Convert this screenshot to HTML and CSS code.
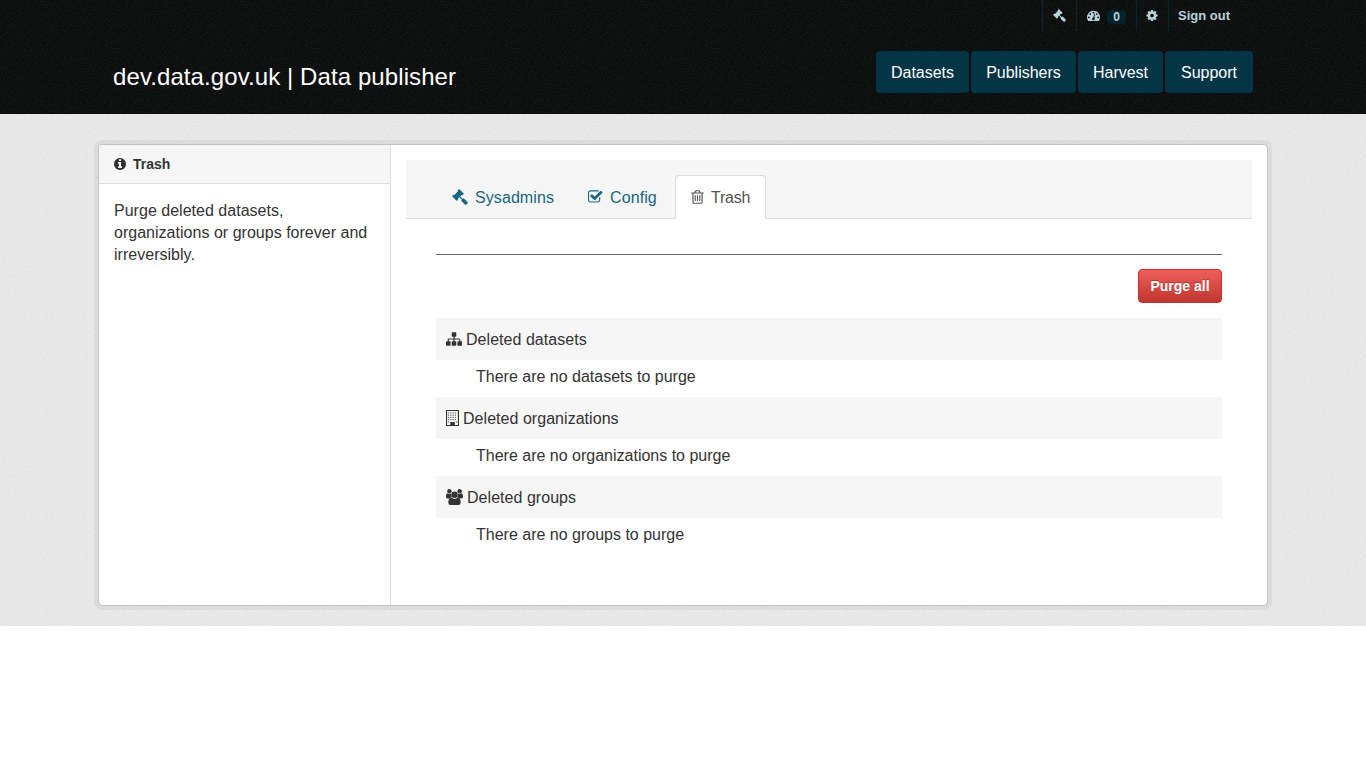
FILE: index.html
```html
<!DOCTYPE html>
<html lang="en">
<head>
<meta charset="utf-8">
<title>Trash - Administration</title>
<link rel="stylesheet" href="styles.css">
</head>
<body>
<svg class="defs" width="0" height="0" aria-hidden="true">
  <symbol id="gavel" viewBox="0 0 1792 1792"><path d="M1771 1536q0 53-37 90l-107 108q-39 37-91 37-53 0-90-37l-363-364q-38-36-38-90 0-53 43-96l-256-256-126 126q-14 14-34 14t-34-14q2 2 12.500 12t12.500 13 10 11.500 10 13.500 6 13.500 5.500 16.500 1.500 18q0 38-28 68-3 3-16.500 18t-19 20.500-18.500 16.500-22 15.500-22 9-26 4.500q-40 0-68-28l-408-408q-28-28-28-68 0-13 4.500-26t9-22 15.500-22 16.500-18.500 20.500-19 18-16.500q30-28 68-28 10 0 18 1.500t16.500 5.500 13.500 6 13.500 10 11.500 10 13 12.500 12 12.500q-14-14-14-34t14-34l348-348q14-14 34-14t34 14q-2-2-12.500-12t-12.500-13-10-11.500-10-13.500-6-13.500-5.500-16.500-1.500-18q0-38 28-68 3-3 16.500-18t19-20.500 18.500-16.500 22-15.500 22-9 26-4.500q40 0 68 28l408 408q28 28 28 68 0 13-4.500 26t-9 22-15.500 22-16.500 18.500-20.500 19-18 16.500q-30 28-68 28-10 0-18-1.500t-16.500-5.500-13.500-6-13.500-10-11.500-10-13-12.500-12-12.500q14 14 14 34t-14 34l-126 126 256 256q43-43 96-43 52 0 91 37l363 363q37 39 37 91z"/></symbol>
  <symbol id="cog" viewBox="128 0 1536 1792"><path d="M1152 896q0-106-75-181t-181-75-181 75-75 181 75 181 181 75 181-75 75-181zm512-109v222q0 12-8 23t-20 13l-185 28q-19 54-39 91 35 50 107 138 10 12 10 25t-9 23q-27 37-99 108t-94 71q-12 0-26-9l-138-108q-44 23-91 38-16 136-29 186-7 28-36 28h-222q-14 0-24.500-8.500t-11.500-21.500l-28-184q-49-16-90-37l-141 107q-10 9-25 9-14 0-25-11-126-114-165-168-7-10-7-23 0-12 8-23 15-21 51-66.500t54-70.500q-27-50-41-99l-183-27q-13-2-21-12.500t-8-23.500v-222q0-12 8-23t19-13l186-28q14-46 39-92-40-57-107-138-10-12-10-24 0-10 9-23 26-36 98.500-107.500t94.500-71.500q13 0 26 10l138 107q44-23 91-38 16-136 29-186 7-28 36-28h222q14 0 24.500 8.500t11.500 21.500l28 184q49 16 90 37l142-107q9-9 24-9 13 0 25 10 129 119 165 170 7 8 7 22 0 12-8 23-15 21-51 66.500t-54 70.500q26 50 41 98l183 28q13 2 21 12.500t8 23.500z"/></symbol>
  <symbol id="gauge" viewBox="0 0 1792 1792"><path d="M384 1152q0-53-37.500-90.500t-90.500-37.500-90.500 37.500-37.500 90.500 37.500 90.500 90.500 37.500 90.500-37.500 37.500-90.500zm192-448q0-53-37.500-90.500t-90.500-37.500-90.500 37.500-37.500 90.500 37.500 90.500 90.500 37.500 90.500-37.500 37.500-90.500zm428 481l101-382q6-26-7.500-48.500t-38.500-29.500-48 6.500-30 39.500l-101 382q-60 5-107 43.500t-63 98.500q-20 77 20 146t117 89 146-20 89-117q16-60-6-117t-72-91zm660-33q0-53-37.500-90.500t-90.500-37.500-90.500 37.500-37.500 90.500 37.500 90.500 90.500 37.500 90.500-37.500 37.500-90.500zm-640-640q0-53-37.500-90.500t-90.500-37.500-90.500 37.500-37.500 90.500 37.500 90.500 90.500 37.500 90.500-37.500 37.500-90.500zm448 192q0-53-37.500-90.500t-90.500-37.500-90.500 37.500-37.500 90.500 37.500 90.500 90.500 37.500 90.500-37.500 37.500-90.500zm320 448q0 261-141 483-19 29-54 29h-1402q-35 0-54-29-141-221-141-483 0-182 71-348t191-286 286-191 348-71 348 71 286 191 191 286 71 348z"/></symbol>
  <symbol id="info" viewBox="128 0 1536 1792"><path d="M1152 1376v-160q0-14-9-23t-23-9h-96v-512q0-14-9-23t-23-9h-320q-14 0-23 9t-9 23v160q0 14 9 23t23 9h96v320h-96q-14 0-23 9t-9 23v160q0 14 9 23t23 9h448q14 0 23-9t9-23zm-128-896v-160q0-14-9-23t-23-9h-192q-14 0-23 9t-9 23v160q0 14 9 23t23 9h192q14 0 23-9t9-23zm640 416q0 209-103 385.500t-279.500 279.500-385.500 103-385.500-103-279.500-279.500-103-385.500 103-385.500 279.500-279.500 385.500-103 385.500 103 279.500 279.500 103 385.500z"/></symbol>
  <symbol id="check" viewBox="64 0 1728 1792"><path d="M1472 930v318q0 119-84.500 203.500t-203.500 84.500h-832q-119 0-203.500-84.500t-84.500-203.500v-832q0-119 84.500-203.500t203.500-84.500h832q63 0 117 25 15 7 18 23 3 17-9 29l-49 49q-10 10-23 10-3 0-9-2-23-6-45-6h-832q-66 0-113 47t-47 113v832q0 66 47 113t113 47h832q66 0 113-47t47-113v-254q0-13 9-22l64-64q10-10 23-10 6 0 12 3 20 8 20 29zm231-489l-814 814q-24 24-57 24t-57-24l-430-430q-24-24-24-57t24-57l110-110q24-24 57-24t57 24l263 263 647-647q24-24 57-24t57 24l110 110q24 24 24 57t-24 57z"/></symbol>
  <symbol id="trash" viewBox="192 0 1408 1792"><path d="M704 736v576q0 14-9 23t-23 9h-64q-14 0-23-9t-9-23v-576q0-14 9-23t23-9h64q14 0 23 9t9 23zm256 0v576q0 14-9 23t-23 9h-64q-14 0-23-9t-9-23v-576q0-14 9-23t23-9h64q14 0 23 9t9 23zm256 0v576q0 14-9 23t-23 9h-64q-14 0-23-9t-9-23v-576q0-14 9-23t23-9h64q14 0 23 9t9 23zm128 724v-948h-896v948q0 22 7 40.500t14.500 27 10.500 8.500h832q3 0 10.500-8.500t14.500-27 7-40.500zm-672-1076h448l-48-117q-7-9-17-11h-317q-10 2-17 11zm928 32v64q0 14-9 23t-23 9h-96v948q0 83-47 143.500t-113 60.500h-832q-66 0-113-58.500t-47-141.500v-952h-96q-14 0-23-9t-9-23v-64q0-14 9-23t23-9h309l70-167q15-37 54-63t79-26h320q40 0 79 26t54 63l70 167h309q14 0 23 9t9 23z"/></symbol>
  <symbol id="sitemap" viewBox="0 0 1792 1792"><path d="M1792 1248v320q0 40-28 68t-68 28h-320q-40 0-68-28t-28-68v-320q0-40 28-68t68-28h96v-192h-512v192h96q40 0 68 28t28 68v320q0 40-28 68t-68 28h-320q-40 0-68-28t-28-68v-320q0-40 28-68t68-28h96v-192h-512v192h96q40 0 68 28t28 68v320q0 40-28 68t-68 28h-320q-40 0-68-28t-28-68v-320q0-40 28-68t68-28h96v-192q0-52 38-90t90-38h512v-192h-96q-40 0-68-28t-28-68v-320q0-40 28-68t68-28h320q40 0 68 28t28 68v320q0 40-28 68t-68 28h-96v192h512q52 0 90 38t38 90v192h96q40 0 68 28t28 68z"/></symbol>
  <symbol id="building" viewBox="0 0 13 16"><path fill-rule="evenodd" d="M.5 0h12q.5 0 .5.500v15q0 .500-.5.500H.5q-.5 0-.5-.500V.500Q0 0 .5 0zM1.100 1.100v13.800h3.100v-2.400q0-.400.400-.400h3.800q.400 0 .400.400v2.400h3.100V1.100z"/><path fill="none" stroke="currentColor" stroke-width="1" stroke-dasharray="1 1.200" d="M2.200 3h8.600M2.200 5.200h8.600M2.200 7.400h8.600M2.200 9.600h8.600"/><path d="M2.200 11.400h1v1h-1zM9.800 11.400h1v1h-1z"/></symbol>
  <symbol id="users" viewBox="0 0 17 16"><circle cx="3.400" cy="2.300" r="2.200"/><circle cx="13.600" cy="2.300" r="2.200"/><path d="M1.200 4.200q2.200 1.500 4 .3-.5 2.200 1 3.800-1.600 0-2.700 1.100H1.800Q0 9.400 0 7.900 0 4.600 1.200 4.200zM15.800 4.200q-2.200 1.500-4 .3.500 2.200-1 3.800 1.600 0 2.700 1.100h1.700q1.800 0 1.800-1.500 0-3.300-1.200-3.700z"/><circle cx="8.500" cy="5.700" r="3.200"/><path d="M5.200 8.600q3.300 2.600 6.600 0 2.900.2 2.900 5.100 0 2.300-2.300 2.300H4.600q-2.300 0-2.300-2.300 0-4.900 2.900-5.100z"/></symbol>
</svg>

<header class="masthead">
  <nav class="account">
    <a class="account-item" href="#"><svg class="icon i13"><use href="#gavel"/></svg></a>
    <a class="account-item notify" href="#"><svg class="icon i13"><use href="#gauge"/></svg><span class="badge">0</span></a>
    <a class="account-item settings" href="#"><svg class="icon cog"><use href="#cog"/></svg></a>
    <a class="account-item signout" href="#">Sign out</a>
  </nav>
  <div class="brand-row">
    <a class="brand" href="#">dev.data.gov.uk | Data publisher</a>
    <nav class="main-nav">
      <a class="n1" href="#">Datasets</a><a class="n2" href="#">Publishers</a><a class="n3" href="#">Harvest</a><a class="n4" href="#">Support</a>
    </nav>
  </div>
</header>

<main class="page">
  <div class="wrapper">
    <aside class="sidebar">
      <h2 class="side-title"><svg class="icon info"><use href="#info"/></svg>Trash</h2>
      <p class="side-text">Purge deleted datasets, organizations or groups forever and irreversibly.</p>
    </aside>
    <section class="primary">
      <nav class="tabs">
        <a class="tab t1" href="#"><svg class="icon i16"><use href="#gavel"/></svg><span class="label">Sysadmins</span></a>
        <a class="tab t2" href="#"><svg class="icon check"><use href="#check"/></svg><span class="label">Config</span></a>
        <a class="tab t3 active" href="#"><svg class="icon trash"><use href="#trash"/></svg><span class="label">Trash</span></a>
      </nav>
      <div class="content">
        <div class="actions"><button class="purge">Purge all</button></div>
        <h3 class="group"><svg class="icon i16"><use href="#sitemap"/></svg><span class="label">Deleted datasets</span></h3>
        <p class="empty">There are no datasets to purge</p>
        <h3 class="group"><svg class="icon building"><use href="#building"/></svg><span class="label">Deleted organizations</span></h3>
        <p class="empty">There are no organizations to purge</p>
        <h3 class="group"><svg class="icon users"><use href="#users"/></svg><span class="label">Deleted groups</span></h3>
        <p class="empty">There are no groups to purge</p>
      </div>
    </section>
  </div>
</main>
</body>
</html>
```
FILE: styles.css
```css
* { box-sizing: border-box; }
body {
  margin: 0;
  background: #fff;
  color: #333;
  font: 16px/22px "Liberation Sans", Arial, sans-serif;
}
a { text-decoration: none; color: inherit; }
h2, h3, p { margin: 0; font-weight: normal; }
.defs { display: block; }
.icon { display: block; flex: none; fill: currentColor; }
.i13 { width: 13px; height: 13px; }
.i16 { width: 16px; height: 16px; }
.label { padding-top: 2px; }

.masthead {
  height: 114px;
  padding: 0 113px;
  color: #fff;
  background: #0c0e0d url("data:image/svg+xml,%3Csvg xmlns='http://www.w3.org/2000/svg' width='100' height='100'%3E%3Cfilter id='n' x='0' y='0' width='1' height='1'%3E%3CfeTurbulence type='fractalNoise' baseFrequency='.7' numOctaves='2' stitchTiles='stitch'/%3E%3CfeColorMatrix values='0 0 0 0 1 0 0 0 0 1 0 0 0 0 1 .5 0 0 0 -.22'/%3E%3C/filter%3E%3Crect width='100' height='100' filter='url(%23n)' opacity='.25'/%3E%3C/svg%3E");
}
.account {
  display: flex;
  justify-content: flex-end;
  height: 31px;
  padding-right: 13px;
  color: #b9d3dc;
  font: bold 13px/31px "Liberation Sans", Arial, sans-serif;
}
.account-item {
  display: flex;
  align-items: center;
  padding: 0 10px;
  border-left: 1px solid #06272f;
}
.account-item .cog { width: 12px; height: 13px; }
.settings { padding-left: 9px; }
.notify { gap: 7px; }
.badge {
  width: 19px;
  height: 14px;
  margin-top: 3px;
  border-radius: 4px;
  background: #04242d;
  font-size: 12px;
  line-height: 14px;
  text-align: center;
}
.signout { padding-left: 9px; }
.brand-row {
  display: flex;
  justify-content: space-between;
  padding-top: 20px;
}
.brand { padding-top: 11px; font-size: 24px; line-height: 30px; letter-spacing: .09px; }
.main-nav { display: flex; gap: 2px; }
.main-nav a {
  height: 42px;
  border-radius: 4px;
  background: #033547;
  line-height: 44px;
  text-align: center;
}
.n1 { width: 93px; }
.n2 { width: 105px; }
.n3 { width: 85px; }
.n4 { width: 88px; }

.page {
  height: 512px;
  padding: 30px 98px 20px;
  background: #e6e6e6 url("data:image/svg+xml,%3Csvg xmlns='http://www.w3.org/2000/svg' width='100' height='100'%3E%3Cfilter id='n' x='0' y='0' width='1' height='1'%3E%3CfeTurbulence type='fractalNoise' baseFrequency='.7' numOctaves='2' stitchTiles='stitch'/%3E%3CfeColorMatrix values='0 0 0 0 1 0 0 0 0 1 0 0 0 0 1 2 0 0 0 -.9'/%3E%3C/filter%3E%3Crect width='100' height='100' filter='url(%23n)' opacity='.4'/%3E%3C/svg%3E");
}
.wrapper {
  display: flex;
  height: 462px;
  border: 1px solid #c4c4c4;
  border-radius: 4px;
  background: #fff;
  background-clip: padding-box;
  box-shadow: 0 0 0 4px rgba(0, 0, 0, .05);
}
.sidebar { width: 292px; border-right: 1px solid #ddd; }
.side-title {
  display: flex;
  align-items: center;
  gap: 7px;
  height: 39px;
  padding-left: 15px;
  border-bottom: 1px solid #ddd;
  border-top-left-radius: 3px;
  background: #f6f6f6;
  font-size: 14px;
  font-weight: bold;
}
.info { width: 12px; height: 14px; }
.side-text { padding: 16px 15px; letter-spacing: .02px; }

.primary { flex: 1; padding: 15px; }
.tabs {
  display: flex;
  align-items: flex-end;
  height: 59px;
  padding-left: 30px;
  border-bottom: 1px solid #ddd;
  background: #f6f6f6;
}
.tab {
  display: flex;
  align-items: center;
  height: 44px;
  margin-bottom: -1px;
  border: 1px solid transparent;
  border-radius: 4px 4px 0 0;
  color: #186581;
}
.t1 { width: 136px; padding-left: 15px; gap: 7px; letter-spacing: .08px; }
.t2 { width: 103px; padding-left: 15px; gap: 7px; letter-spacing: .1px; }
.t3 { width: 91px; padding-left: 15px; gap: 7px; letter-spacing: -.2px; }
.tab.active { border-color: #ddd; border-bottom-color: #fff; background: #fff; color: #555; }
.check { width: 15px; height: 16px; }
.trash { width: 13px; height: 16px; }

.content { margin: 35px 30px 0; border-top: 1px solid #6b6868; }
.actions { display: flex; justify-content: flex-end; padding: 14px 0 15px; }
.purge {
  width: 84px;
  height: 34px;
  padding: 0;
  border: 1px solid #c9302c;
  border-radius: 4px;
  background: linear-gradient(#ee5f5b, #bd362f);
  color: #fff;
  font: bold 14px/20px "Liberation Sans", Arial, sans-serif;
  text-shadow: 0 -1px 0 rgba(0, 0, 0, .25);
}
.group {
  display: flex;
  align-items: center;
  gap: 4px;
  height: 42px;
  padding-left: 10px;
  background: #f6f6f6;
  font-size: 16px;
  letter-spacing: .04px;
}
.building { width: 13px; height: 16px; }
.users { width: 17px; height: 16px; }
.empty { height: 37px; padding: 6px 0 0 40px; }
```
